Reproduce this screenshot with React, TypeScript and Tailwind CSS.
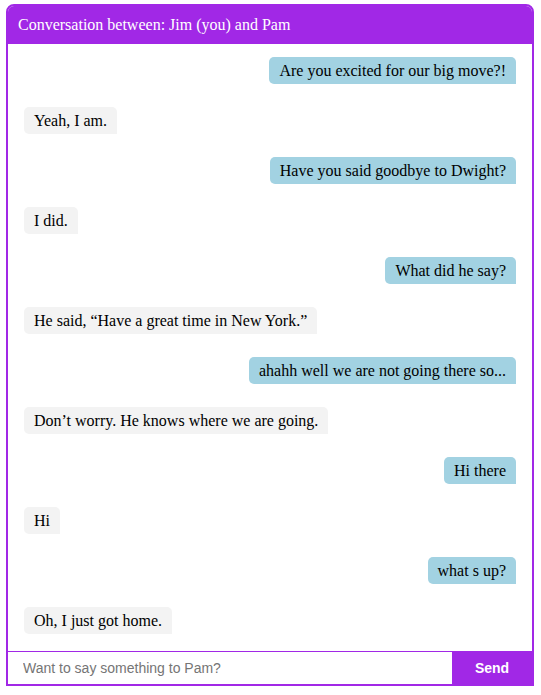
import { useState } from 'react'

interface Message {
  from: 'jim' | 'pam'
  text: string
}

const messages: Message[] = [
  { from: 'jim', text: 'Are you excited for our big move?!' },
  { from: 'pam', text: 'Yeah, I am.' },
  { from: 'jim', text: 'Have you said goodbye to Dwight?' },
  { from: 'pam', text: 'I did.' },
  { from: 'jim', text: 'What did he say?' },
  { from: 'pam', text: 'He said, \u201cHave a great time in New York.\u201d' },
  { from: 'jim', text: 'ahahh well we are not going there so...' },
  { from: 'pam', text: 'Don\u2019t worry. He knows where we are going.' },
  { from: 'jim', text: 'Hi there' },
  { from: 'pam', text: 'Hi' },
  { from: 'jim', text: 'what s up?' },
  { from: 'pam', text: 'Oh, I just got home.' },
]

export default function App() {
  const [draft, setDraft] = useState('')

  return (
    <div className="pt-[4px] pl-[6px]">
      <div className="w-[528px] h-[682px] flex flex-col border-2 border-[#a128e6] rounded-t-[8px] overflow-hidden bg-white">
        {/* Header */}
        <div className="h-[38px] flex items-center bg-[#a128e6] px-[10px] text-white text-[16px] font-['Liberation_Serif',serif]">
          Conversation between: Jim (you) and Pam
        </div>

        {/* Messages */}
        <div className="flex-1 flex flex-col gap-[23px] pt-[13px] px-[16px] font-['Liberation_Serif',serif] text-[16px] text-black">
          {messages.map((m, i) => (
            <div key={i} className={m.from === 'jim' ? 'flex justify-end' : 'flex justify-start'}>
              <div
                className={
                  'h-[27px] leading-[27px] px-[10px] rounded-[5px] rounded-br-none whitespace-nowrap ' +
                  (m.from === 'jim' ? 'bg-[#a2d2e2]' : 'bg-[#f3f3f3]')
                }
              >
                {m.text}
              </div>
            </div>
          ))}
        </div>

        {/* Composer */}
        <div className="h-[33px] flex border-t border-[#a128e6] font-['Liberation_Sans',Arial,sans-serif] text-[14px]">
          <input
            value={draft}
            onChange={(e) => setDraft(e.target.value)}
            placeholder="Want to say something to Pam?"
            className="flex-1 min-w-0 px-[15px] outline-none placeholder:text-[#757575] text-black"
          />
          <button className="w-[80px] bg-[#a128e6] text-white font-bold">Send</button>
        </div>
      </div>
    </div>
  )
}
